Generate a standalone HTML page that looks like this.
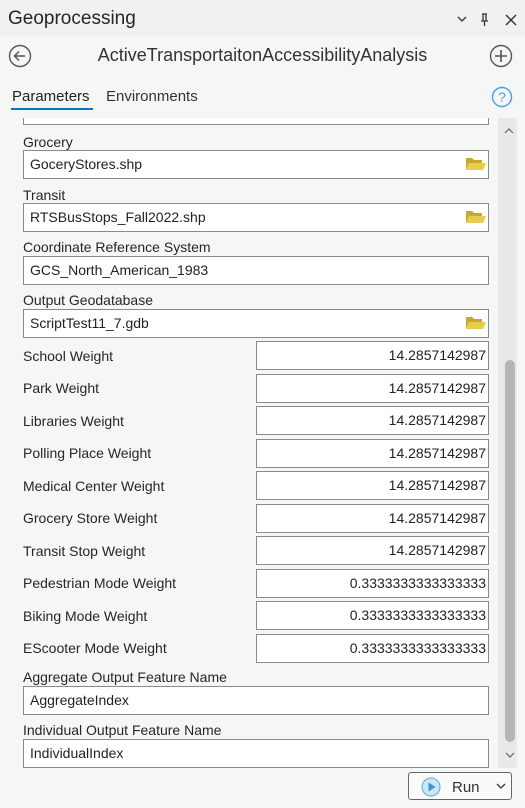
<!DOCTYPE html><html><head><style>
body{margin:0;width:525px;height:808px;background:#f5f6f6;font-family:"Liberation Sans",sans-serif;position:relative;overflow:hidden;color:#262626}
.a{position:absolute}
.lbl{position:absolute;left:23px;font-size:14px;line-height:16px}
.box{position:absolute;background:#fff;border:1px solid #8a8a8a;box-sizing:border-box;font-size:14px;line-height:26px;padding:0 6px;color:#222}
.num{text-align:right;padding-right:2px}
.fold{position:absolute;left:465px;width:21px;height:14px}
</style></head><body>
<div class="box" style="left:23px;top:100px;width:466px;height:25px"></div>
<div class="a" style="left:0;top:36px;width:525px;height:82px;background:#f5f6f6"></div>
<div class="a" style="left:0;top:0;width:525px;height:36px;background:#f0f1f1"></div>
<div class="a" style="left:8px;top:8px;font-size:19px">Geoprocessing</div>
<svg class="a" style="left:455px;top:12px" width="62" height="16"><path d="M3 5l4 4 4-4" stroke="#333" fill="none" stroke-width="1.3"/><path d="M28 2v7M31 2v7M26 9h7M29.5 9v5M27 2h5" stroke="#333" fill="none" stroke-width="1.3"/><path d="M51 3l10 10M61 3l-10 10" stroke="#333" stroke-width="1.4"/></svg>
<svg class="a" style="left:8px;top:44px" width="26" height="26"><circle cx="12" cy="12" r="10.5" stroke="#555" fill="none" stroke-width="1.4"/><path d="M17 12H7M11 7.5L6.5 12l4.5 4.5" stroke="#555" fill="none" stroke-width="1.5"/></svg>
<div class="a" style="left:0;width:525px;text-align:center;top:45px;font-size:18px;color:#333">ActiveTransportaitonAccessibilityAnalysis</div>
<svg class="a" style="left:489px;top:44px" width="26" height="26"><circle cx="12" cy="12" r="10.5" stroke="#555" fill="none" stroke-width="1.4"/><path d="M12 6v12M6 12h12" stroke="#555" stroke-width="1.6"/></svg>
<div class="a" style="left:12px;top:88px;font-size:15px;color:#222">Parameters</div>
<div class="a" style="left:11px;top:108px;width:82px;height:2px;background:#0079c1"></div>
<div class="a" style="left:106px;top:88px;font-size:15px;color:#333">Environments</div>
<svg class="a" style="left:491px;top:86px" width="22" height="22"><circle cx="11" cy="11" r="9.5" stroke="#4a9fdc" fill="none" stroke-width="1.4"/><text x="11" y="16" font-size="14" text-anchor="middle" fill="#4a9fdc" font-family="Liberation Sans">?</text></svg>
<div class="a" style="left:498px;top:118px;width:19px;height:650px;background:#e8e9e9"></div>
<div class="a" style="left:505px;top:360px;width:10px;height:382px;background:#b5b5b5;border-radius:5px"></div>
<svg class="a" style="left:503px;top:126px" width="12" height="10"><path d="M2 7l4-4 4 4" stroke="#666" fill="none" stroke-width="1.2"/></svg>
<svg class="a" style="left:504px;top:750px" width="12" height="10"><path d="M2 3l4 4 4-4" stroke="#666" fill="none" stroke-width="1.2"/></svg>
<div class="lbl" style="top:134px">Grocery</div><div class="box" style="left:23px;top:150px;width:466px;height:29px">GoceryStores.shp</div>
<div class="lbl" style="top:187px">Transit</div><div class="box" style="left:23px;top:203px;width:466px;height:29px">RTSBusStops_Fall2022.shp</div>
<div class="lbl" style="top:239px">Coordinate Reference System</div><div class="box" style="left:23px;top:256px;width:466px;height:29px">GCS_North_American_1983</div>
<div class="lbl" style="top:292px">Output Geodatabase</div><div class="box" style="left:23px;top:309px;width:466px;height:29px">ScriptTest11_7.gdb</div>
<svg class="fold" style="top:157px" viewBox="0 0 21 14"><path d="M1 1h6l2 2h8v3H4L1 13z" fill="#c9a92a"/><path d="M4 6h17l-3 7H1z" fill="#e6cc50"/></svg>
<svg class="fold" style="top:210px" viewBox="0 0 21 14"><path d="M1 1h6l2 2h8v3H4L1 13z" fill="#c9a92a"/><path d="M4 6h17l-3 7H1z" fill="#e6cc50"/></svg>
<svg class="fold" style="top:316px" viewBox="0 0 21 14"><path d="M1 1h6l2 2h8v3H4L1 13z" fill="#c9a92a"/><path d="M4 6h17l-3 7H1z" fill="#e6cc50"/></svg>
<div class="lbl" style="top:348px">School Weight</div><div class="box num" style="left:256px;top:341px;width:233px;height:29px">14.2857142987</div>
<div class="lbl" style="top:380px">Park Weight</div><div class="box num" style="left:256px;top:374px;width:233px;height:29px">14.2857142987</div>
<div class="lbl" style="top:413px">Libraries Weight</div><div class="box num" style="left:256px;top:406px;width:233px;height:29px">14.2857142987</div>
<div class="lbl" style="top:445px">Polling Place Weight</div><div class="box num" style="left:256px;top:439px;width:233px;height:29px">14.2857142987</div>
<div class="lbl" style="top:478px">Medical Center Weight</div><div class="box num" style="left:256px;top:471px;width:233px;height:29px">14.2857142987</div>
<div class="lbl" style="top:510px">Grocery Store Weight</div><div class="box num" style="left:256px;top:504px;width:233px;height:29px">14.2857142987</div>
<div class="lbl" style="top:543px">Transit Stop Weight</div><div class="box num" style="left:256px;top:536px;width:233px;height:29px">14.2857142987</div>
<div class="lbl" style="top:575px">Pedestrian Mode Weight</div><div class="box num" style="left:256px;top:569px;width:233px;height:29px">0.3333333333333333</div>
<div class="lbl" style="top:608px">Biking Mode Weight</div><div class="box num" style="left:256px;top:601px;width:233px;height:29px">0.3333333333333333</div>
<div class="lbl" style="top:640px">EScooter Mode Weight</div><div class="box num" style="left:256px;top:634px;width:233px;height:29px">0.3333333333333333</div>
<div class="lbl" style="top:669px">Aggregate Output Feature Name</div><div class="box" style="left:23px;top:686px;width:466px;height:29px">AggregateIndex</div>
<div class="lbl" style="top:722px">Individual Output Feature Name</div><div class="box" style="left:23px;top:739px;width:466px;height:29px">IndividualIndex</div>
<div class="a" style="left:408px;top:772px;width:104px;height:28px;border:1px solid #666;border-radius:3px;box-sizing:border-box;background:#fafafa"></div>
<svg class="a" style="left:421px;top:777px" width="20" height="20"><circle cx="10" cy="10" r="9" fill="#cde6f7" stroke="#5aa9e0"/><path d="M7.5 5.5v9l7-4.5z" fill="#3a94d6"/></svg>
<div class="a" style="left:452px;top:779px;font-size:15px;color:#333">Run</div>
<svg class="a" style="left:496px;top:782px" width="10" height="8"><path d="M1 2l4 4 4-4" stroke="#333" fill="none" stroke-width="1.3"/></svg>
</body></html>
